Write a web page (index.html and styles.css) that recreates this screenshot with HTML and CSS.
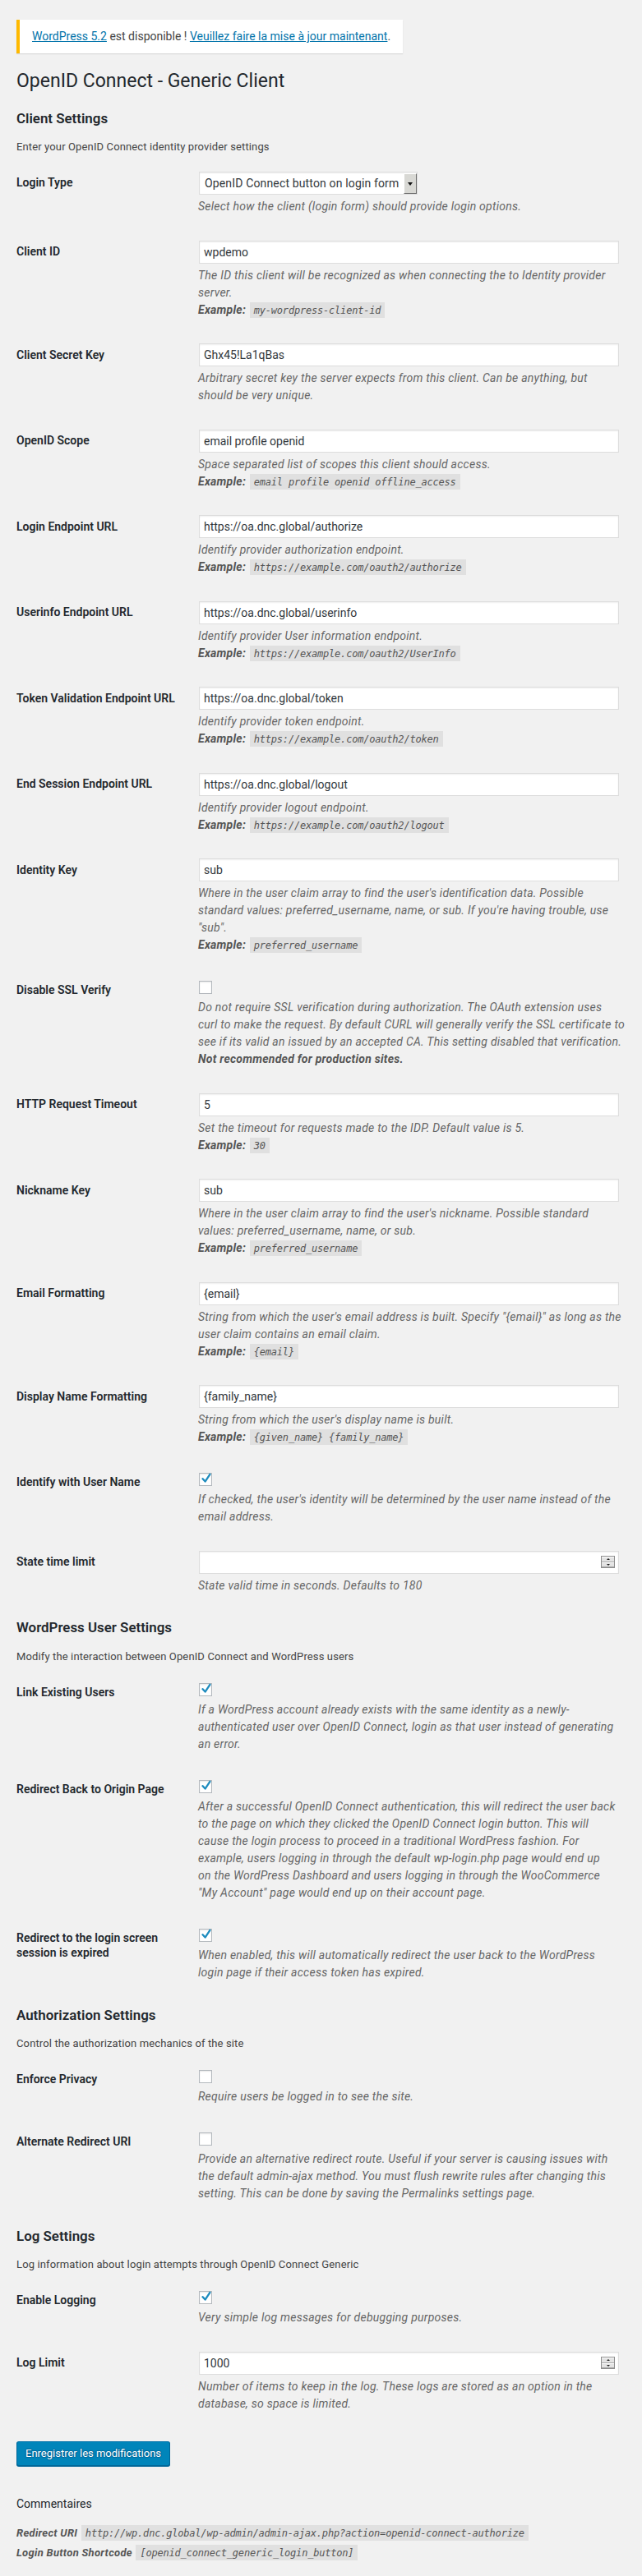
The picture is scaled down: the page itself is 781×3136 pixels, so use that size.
FILE: index.html
```html
<!DOCTYPE html>
<html lang="fr">
<head>
<meta charset="utf-8">
<title>OpenID Connect - Generic Client</title>
<link rel="stylesheet" href="styles.css">
</head>
<body>
<div class="page">
  <div class="update-nag"><a href="#">WordPress 5.2</a> est disponible ! <a href="#">Veuillez faire la mise à jour maintenant</a>.</div>

  <div class="wrap">
    <h1 class="page-title">OpenID Connect - Generic Client</h1>

    <form class="settings-form">
      <h2 class="section-title">Client Settings</h2>
      <div class="section-desc">Enter your OpenID Connect identity provider settings</div>

      <div class="form-table">
        <div class="row">
          <div class="label">Login Type</div>
          <div class="field">
            <div class="select"><span class="select-text">OpenID Connect button on login form</span><span class="select-arrow"><span class="tri-down"></span></span></div>
            <p class="description">Select how the client (login form) should provide login options.</p>
          </div>
        </div>

        <div class="row">
          <div class="label">Client ID</div>
          <div class="field">
            <div class="text-input">wpdemo</div>
            <p class="description">The ID this client will be recognized as when connecting the to Identity provider<br>server.<br><strong>Example:</strong> <code>my-wordpress-client-id</code></p>
          </div>
        </div>

        <div class="row">
          <div class="label">Client Secret Key</div>
          <div class="field">
            <div class="text-input">Ghx45!La1qBas</div>
            <p class="description">Arbitrary secret key the server expects from this client. Can be anything, but<br>should be very unique.</p>
          </div>
        </div>

        <div class="row">
          <div class="label">OpenID Scope</div>
          <div class="field">
            <div class="text-input">email profile openid</div>
            <p class="description">Space separated list of scopes this client should access.<br><strong>Example:</strong> <code>email profile openid offline_access</code></p>
          </div>
        </div>

        <div class="row">
          <div class="label">Login Endpoint URL</div>
          <div class="field">
            <div class="text-input">https://oa.dnc.global/authorize</div>
            <p class="description">Identify provider authorization endpoint.<br><strong>Example:</strong> <code>https://example.com/oauth2/authorize</code></p>
          </div>
        </div>

        <div class="row">
          <div class="label">Userinfo Endpoint URL</div>
          <div class="field">
            <div class="text-input">https://oa.dnc.global/userinfo</div>
            <p class="description">Identify provider User information endpoint.<br><strong>Example:</strong> <code>https://example.com/oauth2/UserInfo</code></p>
          </div>
        </div>

        <div class="row">
          <div class="label">Token Validation Endpoint URL</div>
          <div class="field">
            <div class="text-input">https://oa.dnc.global/token</div>
            <p class="description">Identify provider token endpoint.<br><strong>Example:</strong> <code>https://example.com/oauth2/token</code></p>
          </div>
        </div>

        <div class="row">
          <div class="label">End Session Endpoint URL</div>
          <div class="field">
            <div class="text-input">https://oa.dnc.global/logout</div>
            <p class="description">Identify provider logout endpoint.<br><strong>Example:</strong> <code>https://example.com/oauth2/logout</code></p>
          </div>
        </div>

        <div class="row">
          <div class="label">Identity Key</div>
          <div class="field">
            <div class="text-input">sub</div>
            <p class="description">Where in the user claim array to find the user's identification data. Possible<br>standard values: preferred_username, name, or sub. If you're having trouble, use<br>"sub".<br><strong>Example:</strong> <code>preferred_username</code></p>
          </div>
        </div>

        <div class="row">
          <div class="label">Disable SSL Verify</div>
          <div class="field">
            <div class="check-line"><span class="checkbox"></span></div>
            <p class="description">Do not require SSL verification during authorization. The OAuth extension uses<br>curl to make the request. By default CURL will generally verify the SSL certificate to<br>see if its valid an issued by an accepted CA. This setting disabled that verification.<br><strong>Not recommended for production sites.</strong></p>
          </div>
        </div>

        <div class="row">
          <div class="label">HTTP Request Timeout</div>
          <div class="field">
            <div class="text-input">5</div>
            <p class="description">Set the timeout for requests made to the IDP. Default value is 5.<br><strong>Example:</strong> <code>30</code></p>
          </div>
        </div>

        <div class="row">
          <div class="label">Nickname Key</div>
          <div class="field">
            <div class="text-input">sub</div>
            <p class="description">Where in the user claim array to find the user's nickname. Possible standard<br>values: preferred_username, name, or sub.<br><strong>Example:</strong> <code>preferred_username</code></p>
          </div>
        </div>

        <div class="row">
          <div class="label">Email Formatting</div>
          <div class="field">
            <div class="text-input">{email}</div>
            <p class="description">String from which the user's email address is built. Specify "{email}" as long as the<br>user claim contains an email claim.<br><strong>Example:</strong> <code>{email}</code></p>
          </div>
        </div>

        <div class="row">
          <div class="label">Display Name Formatting</div>
          <div class="field">
            <div class="text-input">{family_name}</div>
            <p class="description">String from which the user's display name is built.<br><strong>Example:</strong> <code>{given_name} {family_name}</code></p>
          </div>
        </div>

        <div class="row">
          <div class="label">Identify with User Name</div>
          <div class="field">
            <div class="check-line"><span class="checkbox"><svg class="check" viewBox="0 0 16 16" width="16" height="16"><path d="M3.6 8.2 L6.6 11.6 L12.4 2.8" fill="none" stroke="#1e8cbe" stroke-width="2.3" stroke-linecap="round" stroke-linejoin="round"/></svg></span></div>
            <p class="description">If checked, the user's identity will be determined by the user name instead of the<br>email address.</p>
          </div>
        </div>

        <div class="row">
          <div class="label">State time limit</div>
          <div class="field">
            <div class="text-input number-input"><span class="num-value"></span><span class="spinner"><span class="spin-half"><span class="tri-up-sm"></span></span><span class="spin-half"><span class="tri-down-sm"></span></span></span></div>
            <p class="description">State valid time in seconds. Defaults to 180</p>
          </div>
        </div>
      </div>

      <h2 class="section-title">WordPress User Settings</h2>
      <div class="section-desc">Modify the interaction between OpenID Connect and WordPress users</div>

      <div class="form-table">
        <div class="row">
          <div class="label">Link Existing Users</div>
          <div class="field">
            <div class="check-line"><span class="checkbox"><svg class="check" viewBox="0 0 16 16" width="16" height="16"><path d="M3.6 8.2 L6.6 11.6 L12.4 2.8" fill="none" stroke="#1e8cbe" stroke-width="2.3" stroke-linecap="round" stroke-linejoin="round"/></svg></span></div>
            <p class="description">If a WordPress account already exists with the same identity as a newly-<br>authenticated user over OpenID Connect, login as that user instead of generating<br>an error.</p>
          </div>
        </div>

        <div class="row">
          <div class="label">Redirect Back to Origin Page</div>
          <div class="field">
            <div class="check-line"><span class="checkbox"><svg class="check" viewBox="0 0 16 16" width="16" height="16"><path d="M3.6 8.2 L6.6 11.6 L12.4 2.8" fill="none" stroke="#1e8cbe" stroke-width="2.3" stroke-linecap="round" stroke-linejoin="round"/></svg></span></div>
            <p class="description">After a successful OpenID Connect authentication, this will redirect the user back<br>to the page on which they clicked the OpenID Connect login button. This will<br>cause the login process to proceed in a traditional WordPress fashion. For<br>example, users logging in through the default wp-login.php page would end up<br>on the WordPress Dashboard and users logging in through the WooCommerce<br>"My Account" page would end up on their account page.</p>
          </div>
        </div>

        <div class="row">
          <div class="label">Redirect to the login screen session is expired</div>
          <div class="field">
            <div class="check-line"><span class="checkbox"><svg class="check" viewBox="0 0 16 16" width="16" height="16"><path d="M3.6 8.2 L6.6 11.6 L12.4 2.8" fill="none" stroke="#1e8cbe" stroke-width="2.3" stroke-linecap="round" stroke-linejoin="round"/></svg></span></div>
            <p class="description">When enabled, this will automatically redirect the user back to the WordPress<br>login page if their access token has expired.</p>
          </div>
        </div>
      </div>

      <h2 class="section-title">Authorization Settings</h2>
      <div class="section-desc">Control the authorization mechanics of the site</div>

      <div class="form-table">
        <div class="row">
          <div class="label">Enforce Privacy</div>
          <div class="field">
            <div class="check-line"><span class="checkbox"></span></div>
            <p class="description">Require users be logged in to see the site.</p>
          </div>
        </div>

        <div class="row">
          <div class="label">Alternate Redirect URI</div>
          <div class="field">
            <div class="check-line"><span class="checkbox"></span></div>
            <p class="description">Provide an alternative redirect route. Useful if your server is causing issues with<br>the default admin-ajax method. You must flush rewrite rules after changing this<br>setting. This can be done by saving the Permalinks settings page.</p>
          </div>
        </div>
      </div>

      <h2 class="section-title">Log Settings</h2>
      <div class="section-desc">Log information about login attempts through OpenID Connect Generic</div>

      <div class="form-table">
        <div class="row">
          <div class="label">Enable Logging</div>
          <div class="field">
            <div class="check-line"><span class="checkbox"><svg class="check" viewBox="0 0 16 16" width="16" height="16"><path d="M3.6 8.2 L6.6 11.6 L12.4 2.8" fill="none" stroke="#1e8cbe" stroke-width="2.3" stroke-linecap="round" stroke-linejoin="round"/></svg></span></div>
            <p class="description">Very simple log messages for debugging purposes.</p>
          </div>
        </div>

        <div class="row">
          <div class="label">Log Limit</div>
          <div class="field">
            <div class="text-input number-input"><span class="num-value">1000</span><span class="spinner"><span class="spin-half"><span class="tri-up-sm"></span></span><span class="spin-half"><span class="tri-down-sm"></span></span></span></div>
            <p class="description">Number of items to keep in the log. These logs are stored as an option in the<br>database, so space is limited.</p>
          </div>
        </div>
      </div>

      <p class="submit"><span class="button-primary">Enregistrer les modifications</span></p>
    </form>

    <h4 class="notes-title">Commentaires</h4>
    <p class="note"><strong>Redirect URI</strong> <code>http://wp.dnc.global/wp-admin/admin-ajax.php?action=openid-connect-authorize</code></p>
    <p class="note"><strong>Login Button Shortcode</strong> <code>[openid_connect_generic_login_button]</code></p>
  </div>
</div>
</body>
</html>
```

FILE: styles.css
```css
* {
  box-sizing: border-box;
}

html,
body {
  margin: 0;
  padding: 0;
}

body {
  background: #f1f1f1;
  color: #444;
  font-family: Roboto, "Liberation Sans", sans-serif;
  font-size: 13px;
  line-height: 18.2px;
}

.page {
  padding: 0 20px 40px 20px;
}

/* update notice */
.update-nag {
  width: fit-content;
  margin: 24px 0 0;
  padding: 11px 15px;
  font-size: 14px;
  line-height: 19px;
  background: #fff;
  border-left: 4px solid #ffb900;
  box-shadow: 0 1px 1px 0 rgba(0, 0, 0, 0.1);
}

.update-nag a {
  color: #0073aa;
  text-decoration: underline;
}

.wrap {
  margin-top: 10px;
}

.page-title {
  margin: 0;
  padding: 9px 0 4px;
  font-size: 23px;
  font-weight: 400;
  line-height: 29.9px;
  color: #23282d;
}

.settings-form {
  margin: 0;
}

.section-title {
  margin: 16.9px 0;
  font-size: 16.9px;
  font-weight: 600;
  line-height: 18.2px;
  color: #23282d;
}

.section-desc {
  font-size: 13px;
  line-height: 18.2px;
  letter-spacing: 0.13px;
}

.form-table {
  margin: 5px 0 2px;
}

.row {
  display: grid;
  grid-template-columns: 211px 1fr;
}

.label {
  padding: 20px 10px 20px 0;
  font-size: 14px;
  line-height: 18.2px;
  font-weight: 600;
  color: #23282d;
}

.field {
  padding: 15px 8px 15px 10px;
  font-size: 14px;
  line-height: 18.2px;
  min-width: 0;
}

/* inputs */
.text-input {
  height: 28px;
  margin: 0.5px 0 0.8px 1px;
  padding: 0 5px;
  border: 1px solid #ddd;
  background: #fff;
  box-shadow: inset 0 1px 2px rgba(0, 0, 0, 0.07);
  font-size: 14px;
  line-height: 26px;
  color: #32373c;
  white-space: nowrap;
  overflow: hidden;
}

.number-input {
  display: flex;
  align-items: center;
  justify-content: space-between;
  padding-right: 4px;
}

.spinner {
  display: flex;
  flex-direction: column;
  width: 17px;
  height: 15px;
  border: 1px solid #8d8d8d;
  background: #e3e3e3;
}

.spin-half {
  flex: 1;
  display: flex;
  align-items: center;
  justify-content: center;
  border-top: 1px solid #fff;
  border-bottom: 1px solid #a6a6a6;
}

.tri-up-sm {
  width: 0;
  height: 0;
  border-left: 2px solid transparent;
  border-right: 2px solid transparent;
  border-bottom: 2px solid #222;
}

.tri-down-sm {
  width: 0;
  height: 0;
  border-left: 2px solid transparent;
  border-right: 2px solid transparent;
  border-top: 2px solid #222;
}

.select {
  display: flex;
  width: 266px;
  height: 28px;
  margin: 1px 0 1px 1px;
  border: 1px solid #ddd;
  background: #fff;
  box-shadow: inset 0 1px 2px rgba(0, 0, 0, 0.07);
}

.select-text {
  flex: 1;
  padding-left: 6px;
  font-size: 14px;
  line-height: 26px;
  letter-spacing: 0.15px;
  color: #32373c;
  white-space: nowrap;
}

.select-arrow {
  display: flex;
  align-items: center;
  justify-content: center;
  width: 16px;
  margin: 1px 0 0;
  height: 25px;
  background: #d8d8d4;
  border-top: 1px solid #fff;
  border-left: 1px solid #fff;
  border-right: 1px solid #6f6f6f;
  border-bottom: 1px solid #6f6f6f;
}

.tri-down {
  width: 0;
  height: 0;
  border-left: 3px solid transparent;
  border-right: 3px solid transparent;
  border-top: 4px solid #111;
}

/* checkbox */
.check-line {
  height: 18px;
}

.checkbox {
  display: block;
  position: relative;
  width: 16px;
  height: 16px;
  margin: 3px 0 0 1px;
  border: 1px solid #b4b9be;
  background: #fff;
  box-shadow: inset 0 1px 2px rgba(0, 0, 0, 0.1);
}

.check {
  position: absolute;
  left: 0;
  top: -2px;
}

/* descriptions */
.description {
  margin: 4px 0 0;
  font-size: 14px;
  line-height: 21px;
  letter-spacing: 0.25px;
  font-style: italic;
  color: #666;
  white-space: nowrap;
}

.description strong,
.note strong {
  font-weight: 700;
  color: #555;
}

code {
  padding: 3px 5px 2px;
  margin: 0 1px;
  background: rgba(0, 0, 0, 0.07);
  font-family: "DejaVu Sans Mono", "Liberation Mono", monospace;
  font-size: 12px;
  line-height: 14px;
  letter-spacing: -0.2px;
  font-style: inherit;
  color: #555;
}

/* submit */
.submit {
  margin: 20px 0 0;
  padding: 0;
}

.button-primary {
  display: inline-block;
  height: 30px;
  padding: 0 10px 1px;
  border: 1px solid;
  border-color: #0073aa #006799 #006799;
  border-radius: 3px;
  background: #0085ba;
  box-shadow: 0 1px 0 #006799;
  color: #fff;
  font-size: 13px;
  line-height: 28px;
  text-shadow: 0 -1px 1px #006799, 1px 0 1px #006799, 0 1px 1px #006799, -1px 0 1px #006799;
}

/* notes */
.notes-title {
  margin: 37px 0 17px;
  font-size: 14px;
  font-weight: 400;
  line-height: 18.2px;
  color: #23282d;
}

.note {
  margin: 2px 0 5px;
  font-size: 13px;
  line-height: 19.5px;
  letter-spacing: 0.3px;
  font-style: italic;
  color: #666;
}
```
